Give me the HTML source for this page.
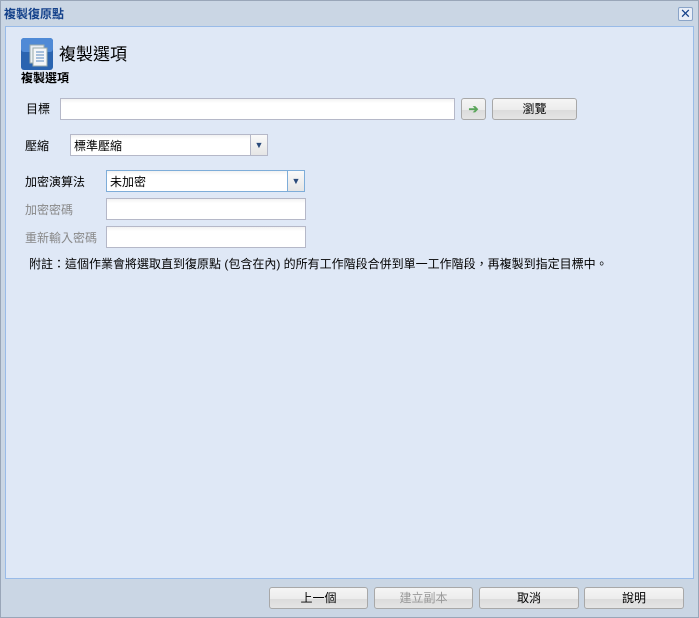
<!DOCTYPE html>
<html><head><meta charset="utf-8"><style>
*{box-sizing:border-box;margin:0;padding:0}
body{width:699px;height:618px;background:#cad6e4;font-family:"Liberation Sans","Noto Sans CJK TC",sans-serif;font-size:12px;color:#000;position:relative;overflow:hidden;box-shadow:inset 0 0 0 1px #99a6b8}
.a{position:absolute}
.title{left:4px;top:5px;font-weight:bold;color:#15428b;font-size:12px}
.close{left:678px;top:7px;width:15px;height:14px;border:1px solid #8aa4c8;background:#e8eef8;border-radius:2px;text-align:center;line-height:12px;color:#15428b;font-size:13px}
.panel{left:5px;top:26px;width:689px;height:553px;background:#dfe8f6;border:1px solid #99bbe8}
.inp{background:#fff;border:1px solid #b5b8c8;background:linear-gradient(#f2f2f2,#fff 4px)}
.lbl{font-size:12px}
.gray{color:#888}
.btn{border:1px solid #a8a8a8;border-radius:3px;background:linear-gradient(#f5f5f5 0,#ececec 55%,#dcdcdc 56%,#e4e4e4);text-align:center;line-height:20px;font-size:12px}
.trig{border:1px solid #b5b8c8;background:linear-gradient(#fafafa,#e6e6e6);width:18px;height:22px}
</style></head><body>
<div class="a title">複製復原點</div>
<div class="a close">✕</div>
<div class="a panel"></div>
<svg class="a" style="left:21px;top:38px" width="32" height="32"><rect x="0" y="0" width="32" height="32" rx="3" fill="#2a64b0"/><rect x="0" y="0" width="32" height="14" rx="3" fill="#4f8ad6"/><rect x="9" y="7" width="14" height="18" fill="#e8eef4" stroke="#9aa" /><rect x="12" y="10" width="14" height="18" fill="#f4f6f8" stroke="#9aa"/><line x1="15" y1="14" x2="23" y2="14" stroke="#5a8ac0"/><line x1="15" y1="17" x2="23" y2="17" stroke="#5a8ac0"/><line x1="15" y1="20" x2="23" y2="20" stroke="#5a8ac0"/><line x1="15" y1="23" x2="23" y2="23" stroke="#5a8ac0"/></svg>
<div class="a" style="left:59px;top:40px;font-size:17px">複製選項</div>
<div class="a" style="left:21px;top:69px;font-weight:bold">複製選項</div>
<div class="a lbl" style="left:26px;top:100px">目標</div>
<div class="a inp" style="left:60px;top:98px;width:395px;height:22px"></div>
<div class="a btn" style="left:461px;top:98px;width:25px;height:22px;color:#5aa55a;font-weight:bold">➔</div>
<div class="a btn" style="left:492px;top:98px;width:85px;height:22px">瀏覽</div>
<div class="a lbl" style="left:25px;top:137px">壓縮</div>
<div class="a inp" style="left:70px;top:134px;width:181px;height:22px;padding:2px 3px">標準壓縮</div>
<div class="a trig" style="left:250px;top:134px;color:#2a4a7a;font-size:9px;text-align:center;line-height:20px">▼</div>
<div class="a lbl" style="left:25px;top:173px">加密演算法</div>
<div class="a inp" style="left:106px;top:170px;width:182px;height:22px;padding:2px 3px;border-color:#7eadd9">未加密</div>
<div class="a trig" style="left:287px;top:170px;border-color:#7eadd9;color:#2a4a7a;font-size:9px;text-align:center;line-height:20px">▼</div>
<div class="a lbl gray" style="left:25px;top:201px">加密密碼</div>
<div class="a inp" style="left:106px;top:198px;width:200px;height:22px"></div>
<div class="a lbl gray" style="left:25px;top:229px">重新輸入密碼</div>
<div class="a inp" style="left:106px;top:226px;width:200px;height:22px"></div>
<div class="a lbl" style="left:29px;top:255px;white-space:nowrap">附註：這個作業會將選取直到復原點 (包含在內) 的所有工作階段合併到單一工作階段，再複製到指定目標中。</div>
<div class="a btn" style="left:269px;top:587px;width:99px;height:22px">上一個</div>
<div class="a btn" style="left:374px;top:587px;width:99px;height:22px;color:#999">建立副本</div>
<div class="a btn" style="left:479px;top:587px;width:100px;height:22px">取消</div>
<div class="a btn" style="left:584px;top:587px;width:100px;height:22px">說明</div>
</body></html>
